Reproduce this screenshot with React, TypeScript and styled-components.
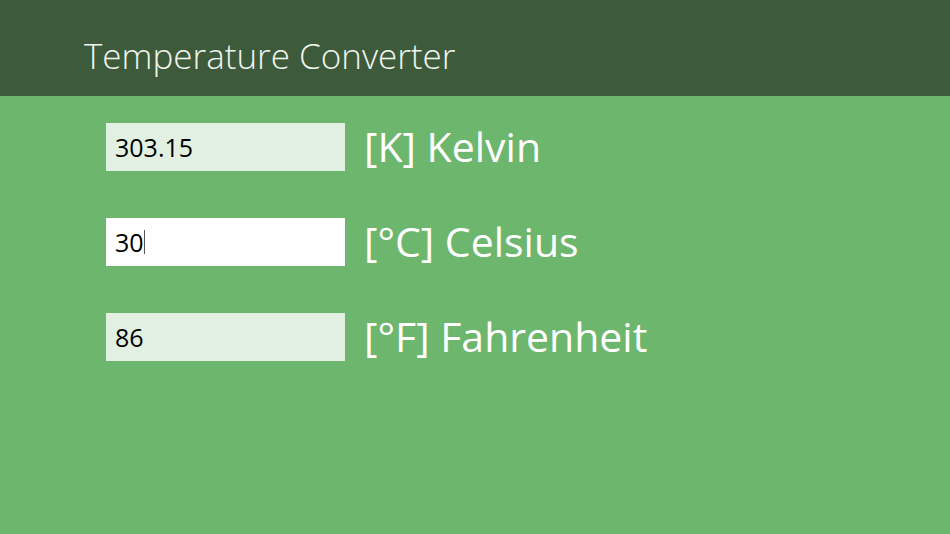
import React from "react";
import styled, { createGlobalStyle } from "styled-components";

const Global = createGlobalStyle`
  html, body { margin: 0; padding: 0; }
  body { width: 950px; height: 534px; overflow: hidden; background: #6db66d; }
`;

const Page = styled.div`
  width: 950px;
  height: 534px;
  display: flex;
  flex-direction: column;
  background: #6db66d;
  font-family: "Open Sans", "Noto Sans", sans-serif;
`;

const Header = styled.header`
  height: 96px;
  flex: none;
  background: #3d5a3a;
  display: flex;
  align-items: flex-start;
  padding-left: 84px;
  box-sizing: border-box;
`;

const Title = styled.h1`
  margin: 0;
  margin-top: 38px;
  font-size: 35px;
  line-height: 1;
  font-weight: 300;
  color: #f1f5f0;
`;

const Rows = styled.main`
  display: flex;
  flex-direction: column;
  gap: 47px;
  padding: 27px 0 0 106px;
`;

const Row = styled.div`
  display: flex;
  align-items: center;
  gap: 19px;
`;

const Field = styled.div<{ $focused?: boolean }>`
  width: 239px;
  height: 48px;
  box-sizing: border-box;
  padding-left: 9px;
  display: flex;
  align-items: center;
  background: ${(p) => (p.$focused ? "#ffffff" : "#e2f0e2")};
  color: #000;
  font-size: 25px;
`;

const Caret = styled.span`
  display: inline-block;
  width: 1px;
  height: 24px;
  background: #555;
`;

const Label = styled.div`
  color: #ffffff;
  font-size: 41px;
  line-height: 1;
  margin-top: -2px;
`;

const rows = [
  { value: "303.15", label: "[K] Kelvin" },
  { value: "30", label: "[°C] Celsius", focused: true },
  { value: "86", label: "[°F] Fahrenheit" },
];

export default function App() {
  return (
    <>
      <Global />
      <Page>
        <Header>
          <Title>Temperature Converter</Title>
        </Header>
        <Rows>
          {rows.map((r) => (
            <Row key={r.label}>
              <Field $focused={r.focused}>
                {r.value}
                {r.focused && <Caret />}
              </Field>
              <Label>{r.label}</Label>
            </Row>
          ))}
        </Rows>
      </Page>
    </>
  );
}
